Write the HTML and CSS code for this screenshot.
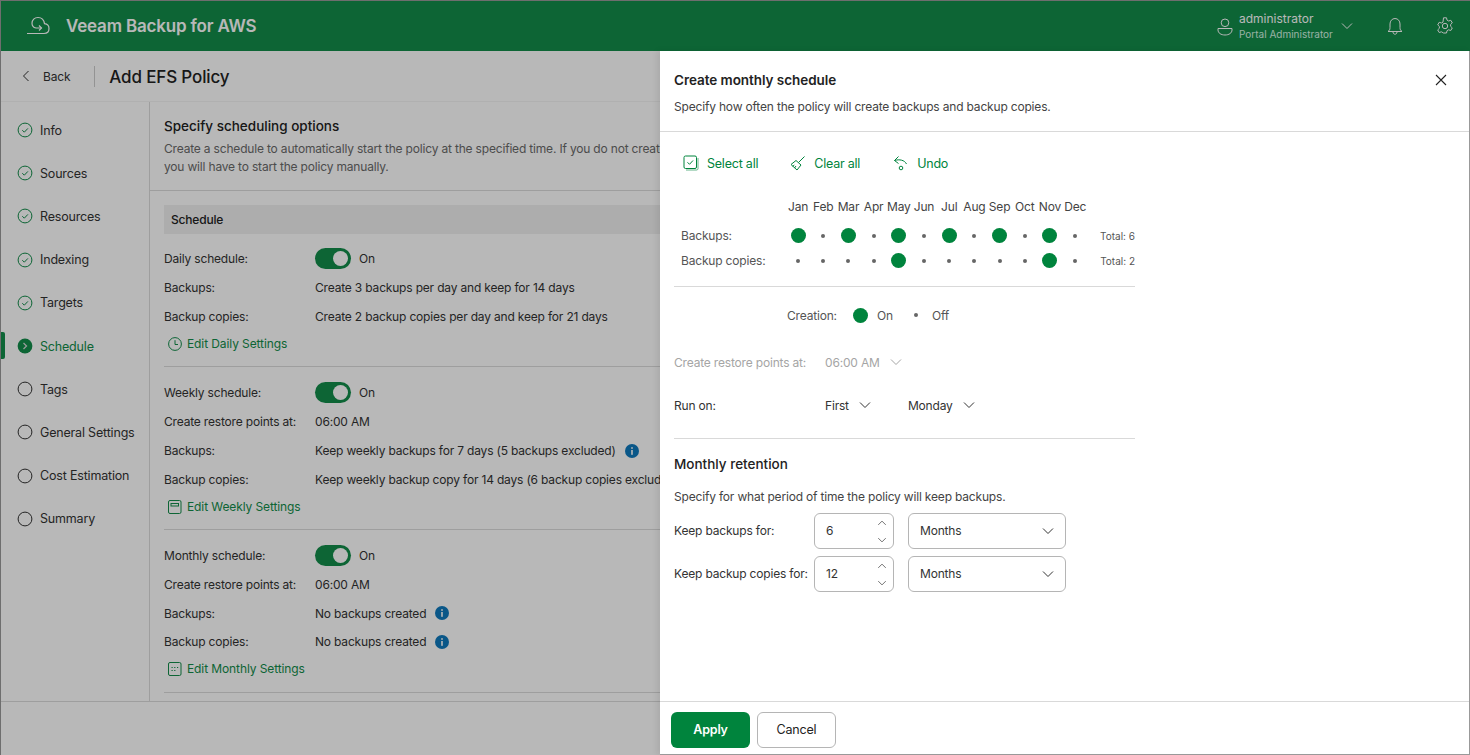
FILE: index.html
```html
<!DOCTYPE html>
<html lang="en">
<head>
    <meta charset="UTF-8">
    <meta name="viewport" content="width=device-width, initial-scale=1.0">
    <title>Add EFS Policy</title>
    <link rel="stylesheet" href="styles.css">
</head>
<body>
    <svg class="defs" width="0" height="0">
        <symbol id="step-done" viewBox="0 0 16 16"><circle cx="8" cy="8" r="6.9" fill="none" stroke="currentColor"/><path d="M5.3 8.2l2 2 3.6-3.8" fill="none" stroke="currentColor"/></symbol>
        <symbol id="step-empty" viewBox="0 0 16 16"><circle cx="8" cy="8" r="6.9" fill="none" stroke="currentColor"/></symbol>
        <symbol id="chevron" viewBox="0 0 12 8"><path d="M1 1.500l5 5 5-5" fill="none" stroke="currentColor"/></symbol>
        <symbol id="info" viewBox="0 0 14 14"><circle cx="7" cy="7" r="7" fill="#0f79bd"/><rect x="6.200" y="6" width="1.600" height="4.800" fill="#fff"/><rect x="6.200" y="3.200" width="1.600" height="1.600" fill="#fff"/></symbol>
    </svg>

    <div class="app">
        <header class="topbar">
            <div class="brand">
                <svg class="brand-icon" viewBox="0 0 24 20" width="24" height="20" fill="none" stroke="currentColor" stroke-width="1.200"><path d="M1 17.500H18c3 0 5-2 5-5 0-2.500-2-4.500-4.500-4.800C18 4 15.500 1.500 12 1.500 8.500 1.500 6 4 6 7.200c0 2.300 1.800 4.300 4 4.800h5.500"/><path d="M13 9.500l2.500 2.500-2.500 2.500"/></svg>
                <span class="brand-name">Veeam Backup for AWS</span>
            </div>
            <div class="top-actions">
                <svg class="user-icon" viewBox="0 0 16 18" width="16" height="18" fill="none" stroke="currentColor"><circle cx="8" cy="4.800" r="3.800"/><path d="M1 10.500h14v1.500c0 3-3 5-7 5s-7-2-7-5z"/></svg>
                <div class="user-info">
                    <div class="user-name">administrator</div>
                    <div class="user-role">Portal Administrator</div>
                </div>
                <svg class="user-chevron" width="12" height="8"><use href="#chevron"/></svg>
                <svg class="bell" viewBox="0 0 16 18" width="16" height="18" fill="none" stroke="currentColor"><path d="M1 14.500c1.500-1 2-2 2-4V7c0-3 2-5.500 5-5.500s5 2.500 5 5.500v3.500c0 2 .5 3 2 4z"/><path d="M6 15c0 1.500 1 2.200 2 2.200s2-.7 2-2.200"/></svg>
                <svg class="gear" viewBox="0 0 18 18" width="18" height="18" fill="none" stroke="currentColor"><circle cx="9" cy="9" r="2.700"/><path d="M7.500 1h3l.5 2.300 1.600.9 2.200-.7 1.500 2.600-1.700 1.600v1.800l1.700 1.600-1.500 2.600-2.200-.7-1.600.9-.5 2.300h-3L7 15.900l-1.600-.9-2.200.7-1.500-2.600 1.700-1.600V9.700L1.700 8.100l1.500-2.600 2.200.7L7 5.300z" transform="translate(0 -.2)"/></svg>
            </div>
        </header>

        <div class="subhead">
            <svg class="back-chevron" viewBox="0 0 8 12" width="8" height="12"><path d="M6.500 1l-5 5 5 5" fill="none" stroke="currentColor"/></svg>
            <span class="back-label">Back</span>
            <span class="subhead-sep"></span>
            <h1 class="page-title">Add EFS Policy</h1>
        </div>

        <div class="main">
            <nav class="steps">
                <div class="step"><svg class="step-icon done"><use href="#step-done"/></svg>Info</div>
                <div class="step"><svg class="step-icon done"><use href="#step-done"/></svg>Sources</div>
                <div class="step"><svg class="step-icon done"><use href="#step-done"/></svg>Resources</div>
                <div class="step"><svg class="step-icon done"><use href="#step-done"/></svg>Indexing</div>
                <div class="step"><svg class="step-icon done"><use href="#step-done"/></svg>Targets</div>
                <div class="step current">
                    <svg class="step-icon" viewBox="0 0 16 16"><circle cx="8" cy="8" r="7.400" fill="currentColor"/><path d="M6.500 5l3 3-3 3" fill="none" stroke="#d4d8d6" stroke-width="1.300"/></svg>Schedule
                </div>
                <div class="step"><svg class="step-icon"><use href="#step-empty"/></svg>Tags</div>
                <div class="step"><svg class="step-icon"><use href="#step-empty"/></svg>General Settings</div>
                <div class="step"><svg class="step-icon"><use href="#step-empty"/></svg>Cost Estimation</div>
                <div class="step"><svg class="step-icon"><use href="#step-empty"/></svg>Summary</div>
            </nav>

            <section class="content">
                <div class="intro">
                    <h2>Specify scheduling options</h2>
                    <p>Create a schedule to automatically start the policy at the specified time. If you do not create a schedule,</p>
                    <p>you will have to start the policy manually.</p>
                </div>
                <div class="schedules">
                    <div class="section-bar">Schedule</div>

                    <div class="sched daily">
                        <div class="row"><span class="key">Daily schedule:</span><span class="toggle"></span><span>On</span></div>
                        <div class="row"><span class="key">Backups:</span><span>Create 3 backups per day and keep for 14 days</span></div>
                        <div class="row"><span class="key">Backup copies:</span><span>Create 2 backup copies per day and keep for 21 days</span></div>
                        <div class="edit-link">
                            <svg viewBox="0 0 14 14" width="14" height="14" fill="none" stroke="currentColor"><circle cx="7" cy="7" r="6.400"/><path d="M7 3.200V7.500H10"/></svg>
                            Edit Daily Settings
                        </div>
                    </div>

                    <div class="sched">
                        <div class="row"><span class="key">Weekly schedule:</span><span class="toggle"></span><span>On</span></div>
                        <div class="row"><span class="key">Create restore points at:</span><span>06:00 AM</span></div>
                        <div class="row"><span class="key">Backups:</span><span>Keep weekly backups for 7 days (5 backups excluded)</span><svg class="info" width="14" height="14"><use href="#info"/></svg></div>
                        <div class="row"><span class="key">Backup copies:</span><span>Keep weekly backup copy for 14 days (6 backup copies excluded)</span></div>
                        <div class="edit-link">
                            <svg viewBox="0 0 14 14" width="14" height="14" fill="none" stroke="currentColor"><rect x=".5" y=".5" width="12.500" height="13" rx="1.500"/><rect x="3" y="3.500" width="7.500" height="2.500"/></svg>
                            Edit Weekly Settings
                        </div>
                    </div>

                    <div class="sched monthly">
                        <div class="row"><span class="key">Monthly schedule:</span><span class="toggle"></span><span>On</span></div>
                        <div class="row"><span class="key">Create restore points at:</span><span>06:00 AM</span></div>
                        <div class="row"><span class="key">Backups:</span><span>No backups created</span><svg class="info" width="14" height="14"><use href="#info"/></svg></div>
                        <div class="row"><span class="key">Backup copies:</span><span>No backups created</span><svg class="info" width="14" height="14"><use href="#info"/></svg></div>
                        <div class="edit-link">
                            <svg viewBox="0 0 14 14" width="14" height="14" fill="none" stroke="currentColor"><rect x=".5" y=".5" width="12.500" height="13" rx="1.500"/><path d="M3.500 5.500h1.200M6.200 5.500h1.200M9 5.500h1.200M3.500 8.500h1.200M6.200 8.500h1.200"/></svg>
                            Edit Monthly Settings
                        </div>
                    </div>
                </div>
            </section>
        </div>

        <div class="page-footer"></div>
    </div>

    <div class="overlay"></div>

    <aside class="panel">
        <div class="panel-head">
            <div>
                <h3>Create monthly schedule</h3>
                <p>Specify how often the policy will create backups and backup copies.</p>
            </div>
            <svg class="close" viewBox="0 0 12 12" width="12" height="12"><path d="M1 1l10 10M11 1L1 11" stroke="#222" fill="none" stroke-width="1.100"/></svg>
        </div>

        <div class="panel-body">
            <div class="toolbar">
                <span class="tool select-all">
                    <svg viewBox="0 0 16 16" width="16" height="16" fill="none" stroke="currentColor"><rect x="1" y="1" width="12.500" height="12.500" rx="1.500"/><path d="M15 3v10.500c0 1-.6 1.500-1.500 1.500H3" opacity=".6"/><path d="M4.500 7.300l2 2 3.500-3.800"/></svg>
                    Select all
                </span>
                <span class="tool clear-all">
                    <svg viewBox="0 0 16 16" width="16" height="16" fill="none" stroke="currentColor"><path d="M1 9.500L6 5.500 11 10 7 15z"/><path d="M8.500 7.500L14.500 1.500M4.500 13l1.500-2M2.800 11.500l1.500-1.700"/></svg>
                    Clear all
                </span>
                <span class="tool undo">
                    <svg viewBox="0 0 16 16" width="16" height="16" fill="none" stroke="currentColor"><path d="M5.500 1.500L1.500 5.500l4 3"/><path d="M1.500 5.500c5-1.500 10-.5 12 3.500"/><circle cx="8" cy="13" r="1.800"/></svg>
                    Undo
                </span>
            </div>

            <div class="month-grid">
                <span class="grid-key"></span>
                <span class="m">Jan</span><span class="m">Feb</span><span class="m">Mar</span><span class="m">Apr</span><span class="m">May</span><span class="m">Jun</span><span class="m">Jul</span><span class="m">Aug</span><span class="m">Sep</span><span class="m">Oct</span><span class="m">Nov</span><span class="m">Dec</span>
                <span class="grid-total"></span>

                <span class="grid-key">Backups:</span>
                <span class="dot on"></span><span class="dot"></span><span class="dot on"></span><span class="dot"></span><span class="dot on"></span><span class="dot"></span><span class="dot on"></span><span class="dot"></span><span class="dot on"></span><span class="dot"></span><span class="dot on"></span><span class="dot"></span>
                <span class="grid-total">Total: 6</span>

                <span class="grid-key">Backup copies:</span>
                <span class="dot"></span><span class="dot"></span><span class="dot"></span><span class="dot"></span><span class="dot on"></span><span class="dot"></span><span class="dot"></span><span class="dot"></span><span class="dot"></span><span class="dot"></span><span class="dot on"></span><span class="dot"></span>
                <span class="grid-total">Total: 2</span>
            </div>

            <hr class="rule first-rule">

            <div class="creation">
                <span class="creation-label">Creation:</span>
                <span class="dot on"></span><span class="creation-on">On</span>
                <span class="dot"></span><span>Off</span>
            </div>

            <div class="opt-row disabled">
                <span class="opt-label">Create restore points at:</span>
                <span class="opt-time">06:00 AM</span>
                <svg width="12" height="8"><use href="#chevron"/></svg>
            </div>

            <div class="opt-row run-on">
                <span class="opt-label">Run on:</span>
                <span class="opt-first">First</span>
                <svg width="12" height="8"><use href="#chevron"/></svg>
                <span class="opt-day">Monday</span>
                <svg width="12" height="8"><use href="#chevron"/></svg>
            </div>

            <hr class="rule second-rule">

            <h4>Monthly retention</h4>
            <p class="retention-note">Specify for what period of time the policy will keep backups.</p>

            <div class="keep-row">
                <span class="keep-label">Keep backups for:</span>
                <div class="spin">
                    <span>6</span>
                    <div class="spin-arrows">
                        <svg class="up" width="10" height="6" viewBox="0 0 12 8"><use href="#chevron"/></svg>
                        <svg width="10" height="6" viewBox="0 0 12 8"><use href="#chevron"/></svg>
                    </div>
                </div>
                <div class="select"><span>Months</span><svg width="12" height="8"><use href="#chevron"/></svg></div>
            </div>
            <div class="keep-row">
                <span class="keep-label">Keep backup copies for:</span>
                <div class="spin">
                    <span>12</span>
                    <div class="spin-arrows">
                        <svg class="up" width="10" height="6" viewBox="0 0 12 8"><use href="#chevron"/></svg>
                        <svg width="10" height="6" viewBox="0 0 12 8"><use href="#chevron"/></svg>
                    </div>
                </div>
                <div class="select"><span>Months</span><svg width="12" height="8"><use href="#chevron"/></svg></div>
            </div>
        </div>

        <div class="panel-foot">
            <button class="btn-apply">Apply</button>
            <button class="btn-cancel">Cancel</button>
        </div>
    </aside>
</body>
</html>
```

FILE: styles.css
```css
* {
    margin: 0;
    padding: 0;
    box-sizing: border-box;
}
body {
    font-family: 'Inter', 'Liberation Sans', sans-serif;
    font-size: 12px;
    color: #2b2b2b;
    background: #fff;
    height: 755px;
    overflow: hidden;
    letter-spacing: -0.18px;
}
.defs {
    position: absolute;
}
.app {
    display: flex;
    flex-direction: column;
    height: 755px;
    border-left: 1px solid #999;
}

/* top bar */
.topbar {
    height: 51px;
    flex: none;
    background: #128c4a;
    color: #fff;
    border-top: 1px solid #999;
    display: flex;
    align-items: center;
    justify-content: space-between;
}
.brand {
    display: flex;
    align-items: center;
    padding-left: 25px;
}
.brand-name {
    margin-left: 16px;
    font-size: 17px;
    font-weight: 600;
    letter-spacing: -0.18px;
}
.top-actions {
    display: flex;
    align-items: center;
    padding-right: 16px;
}
.user-icon {
    margin-top: 2px;
}
.user-info {
    margin-left: 6px;
    width: 101px;
}
.user-name {
    font-size: 12px;
    line-height: 15px;
    letter-spacing: 0;
}
.user-role {
    font-size: 10px;
    line-height: 15px;
    margin-top: 1px;
    letter-spacing: 0;
    color: #d6f5e3;
}
.user-chevron {
    margin-left: 1px;
}
.bell {
    margin-left: 34px;
}
.gear {
    margin-left: 33px;
}

/* back + title */
.subhead {
    height: 51px;
    flex: none;
    display: flex;
    align-items: center;
    background: #fff;
    border-bottom: 1px solid #f4f4f4;
    padding-left: 21px;
}
.back-chevron {
    color: #333;
}
.back-label {
    margin-left: 13px;
    color: #333;
}
.subhead-sep {
    width: 1px;
    height: 21px;
    background: #ccc;
    margin-left: 24px;
    margin-right: 14px;
}
.page-title {
    font-size: 17px;
    font-weight: 500;
    letter-spacing: -0.15px;
    color: #222;
    margin-top: 2px;
}

.main {
    flex: 1;
    display: flex;
    min-height: 0;
}

/* wizard steps */
.steps {
    width: 149px;
    flex: none;
    border-right: 1px solid #dcdcdc;
    padding-top: 6.5px;
}
.step {
    height: 43.2px;
    display: flex;
    align-items: center;
    padding-left: 16px;
    position: relative;
    color: #333;
    white-space: nowrap;
    font-size: 12.5px;
}
.step-icon {
    width: 16px;
    height: 16px;
    margin-right: 7px;
    color: #333;
    flex: none;
}
.step-icon.done {
    color: #128c4a;
}
.step.current {
    color: #128c4a;
}
.step.current .step-icon {
    color: #128c4a;
}
.step.current::before {
    content: "";
    position: absolute;
    left: 0;
    top: 8px;
    width: 4px;
    height: 27px;
    background: #128c4a;
    border-radius: 0 2px 2px 0;
}

/* schedule summary */
.content {
    flex: 1;
    min-width: 0;
    overflow: hidden;
}
.intro {
    height: 89px;
    padding: 15px 14px 0;
    border-bottom: 1px solid #dcdcdc;
    white-space: nowrap;
}
.intro h2 {
    font-size: 13.5px;
    font-weight: 500;
    line-height: 18px;
    margin-bottom: 5px;
    color: #222;
    letter-spacing: 0;
}
.intro p {
    line-height: 18px;
    color: #6a6a6a;
}
.schedules {
    padding: 14px 14px 0;
}
.section-bar {
    height: 29px;
    line-height: 29px;
    background: #f0f0f0;
    padding-left: 7px;
    font-weight: 500;
    color: #222;
}
.sched {
    border-bottom: 1px solid #dcdcdc;
    margin-bottom: 10px;
    height: 153px;
    padding-top: 1px;
    white-space: nowrap;
}
.sched.daily {
    height: 133px;
    padding-top: 10px;
}
.sched.monthly {
    margin-bottom: 0;
}
.row {
    height: 29px;
    display: flex;
    align-items: center;
    color: #333;
}
.key {
    width: 151px;
    flex: none;
}
.toggle {
    width: 36px;
    height: 21px;
    border-radius: 11px;
    background: #128c4a;
    position: relative;
    margin-right: 8px;
}
.toggle::after {
    content: "";
    position: absolute;
    right: 3px;
    top: 3px;
    width: 15px;
    height: 15px;
    border-radius: 50%;
    background: #fff;
}
.info {
    margin-left: 9px;
    flex: none;
}
.edit-link {
    height: 25px;
    display: flex;
    align-items: center;
    gap: 5px;
    padding-left: 4px;
    color: #128c4a;
    letter-spacing: -0.1px;
}
.sched.monthly .row:nth-child(3) {
    height: 28px;
}
.sched.monthly .row:nth-child(4) {
    height: 29px;
}

.page-footer {
    height: 54px;
    flex: none;
    border-top: 1px solid #dcdcdc;
}

/* dimmed backdrop */
.overlay {
    position: absolute;
    inset: 0;
    background: rgba(0, 0, 0, 0.28);
}

/* side panel */
.panel {
    position: absolute;
    left: 660px;
    right: 0;
    top: 51px;
    bottom: 0;
    background: #fff;
    display: flex;
    flex-direction: column;
    box-shadow: -3px 0 6px rgba(0, 0, 0, 0.08);
    border-right: 1px solid #999;
    border-bottom: 1px solid #999;
}
.panel-head {
    height: 81px;
    flex: none;
    border-bottom: 1px solid #d9d9d9;
    padding: 20px 22px 0 14px;
    display: flex;
    justify-content: space-between;
    align-items: flex-start;
}
.panel-head h3 {
    font-size: 13.5px;
    font-weight: 600;
    line-height: 18px;
    margin-bottom: 9px;
    color: #222;
    letter-spacing: -0.05px;
}
.panel-head p {
    line-height: 18px;
    color: #444;
}
.close {
    margin-top: 3px;
}
.panel-body {
    flex: 1;
    padding: 0 0 0 14px;
    width: 475px;
}
.toolbar {
    height: 62px;
    display: flex;
    align-items: center;
    padding-left: 9px;
}
.tool {
    display: flex;
    align-items: center;
    gap: 8px;
    color: #00843d;
    font-size: 12.5px;
    letter-spacing: -0.22px;
}
.clear-all {
    margin-left: 32px;
}
.undo {
    margin-left: 33px;
}

.month-grid {
    display: grid;
    grid-template-columns: 104.5px repeat(12, 25.2px) 1fr;
    grid-template-rows: 29px 25px 25px;
    align-items: center;
    padding-left: 7px;
    height: 79px;
}
.grid-key {
    color: #555;
}
.m {
    text-align: center;
    color: #444;
    margin-top: -5px;
    white-space: nowrap;
}
.grid-total {
    font-size: 10px;
    color: #555;
    text-align: right;
    white-space: nowrap;
    letter-spacing: 0;
}
.dot {
    display: block;
    width: 4px;
    height: 4px;
    border-radius: 50%;
    background: #666;
    justify-self: center;
    flex: none;
}
.dot.on {
    width: 15px;
    height: 15px;
    background: #00843d;
}

.rule {
    border: none;
    border-top: 1px solid #d9d9d9;
}
.first-rule {
    margin-top: 13px;
}
.creation {
    height: 56px;
    display: flex;
    align-items: center;
    padding-left: 113px;
    color: #555;
}
.creation-label {
    width: 66px;
    flex: none;
}
.creation-on {
    width: 15px;
    margin: 0 22px 0 9px;
}
.creation .dot:nth-of-type(4) {
    margin-right: 14px;
}
.opt-row {
    height: 46px;
    padding-top: 2px;
    display: flex;
    align-items: center;
    color: #333;
}
.opt-row svg {
    color: #333;
    flex: none;
}
.opt-label {
    width: 151px;
    flex: none;
}
.opt-row.disabled {
    height: 38px;
    padding-top: 0;
    color: #a5a5a5;
}
.opt-row.disabled svg {
    color: #a5a5a5;
}
.opt-time {
    margin-right: 10px;
}
.opt-first {
    margin-right: 10px;
}
.opt-row svg + .opt-day {
    margin-left: 37px;
    margin-right: 10px;
}
.second-rule {
    margin-top: 11px;
}
.panel-body h4 {
    font-size: 13.5px;
    font-weight: 500;
    line-height: 18px;
    margin-top: 16px;
    color: #222;
    letter-spacing: 0;
}
.retention-note {
    margin-top: 15px;
    line-height: 18px;
    color: #444;
}
.keep-row {
    height: 36px;
    display: flex;
    align-items: center;
    margin-bottom: 7px;
    color: #333;
}
.retention-note + .keep-row {
    margin-top: 7px;
}
.keep-label {
    width: 140px;
    flex: none;
    white-space: nowrap;
    padding-bottom: 2px;
}
.spin {
    width: 80px;
    height: 36px;
    border: 1px solid #b5b5b5;
    border-radius: 6px;
    display: flex;
    align-items: center;
    justify-content: space-between;
    padding: 0 6px 0 11px;
}
.spin > span,
.select > span {
    padding-bottom: 2px;
}
.spin-arrows {
    display: flex;
    flex-direction: column;
    gap: 11px;
    color: #444;
}
.spin-arrows svg {
    display: block;
}
.spin-arrows .up {
    transform: rotate(180deg);
}
.select {
    width: 158px;
    height: 36px;
    margin-left: 14px;
    border: 1px solid #b5b5b5;
    border-radius: 6px;
    display: flex;
    align-items: center;
    justify-content: space-between;
    padding: 0 11px;
}
.select svg {
    color: #333;
}

.panel-foot {
    height: 53px;
    flex: none;
    border-top: 1px solid #d9d9d9;
    padding: 10px 0 0 11px;
    display: flex;
    gap: 7px;
    align-items: flex-start;
}
.panel-foot button {
    width: 79px;
    height: 36px;
    border-radius: 6px;
    font-family: inherit;
    font-size: 12.5px;
    letter-spacing: -0.2px;
    padding-bottom: 2px;
}
.btn-apply {
    background: #00843d;
    border: none;
    color: #fff;
    font-weight: 600;
}
.btn-cancel {
    background: #fff;
    border: 1px solid #b5b5b5;
    color: #222;
}
```
